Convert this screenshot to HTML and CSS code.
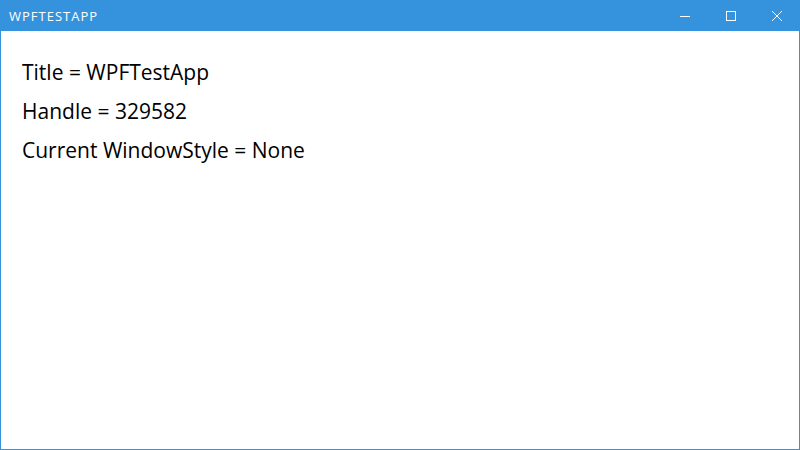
FILE: index.html
```html
<!DOCTYPE html>
<html>
<head>
<meta charset="utf-8">
<link rel="stylesheet" href="styles.css">
</head>
<body>
<div class="window">
  <div class="titlebar">
    <div class="title">WPFTESTAPP</div>
    <div class="controls">
      <div class="btn">
        <svg width="12" height="12" viewBox="0 0 12 12"><line x1="1" y1="6.5" x2="11" y2="6.5" stroke="#fff" stroke-width="1"/></svg>
      </div>
      <div class="btn">
        <svg width="12" height="12" viewBox="0 0 12 12"><rect x="1.5" y="1.5" width="9" height="9" fill="none" stroke="#fff" stroke-width="1"/></svg>
      </div>
      <div class="btn">
        <svg width="12" height="12" viewBox="0 0 12 12"><path d="M1 1 L11 11 M11 1 L1 11" stroke="#fff" stroke-width="1"/></svg>
      </div>
    </div>
  </div>
  <div class="content">
    <div class="line">Title = WPFTestApp</div>
    <div class="line">Handle = 329582</div>
    <div class="line">Current WindowStyle = None</div>
  </div>
</div>
</body>
</html>
```
FILE: styles.css
```css
html, body {
  margin: 0;
  padding: 0;
  width: 800px;
  height: 450px;
  overflow: hidden;
  background: #fff;
}
.window {
  width: 800px;
  height: 450px;
  box-sizing: border-box;
  border: 1px solid #3592dd;
  border-top: none;
  display: flex;
  flex-direction: column;
}
.titlebar {
  height: 31px;
  background: #3592dd;
  margin: 0 -1px;
  display: flex;
  align-items: center;
  justify-content: space-between;
  flex-shrink: 0;
}
.title {
  color: #fff;
  font-family: "Open Sans", sans-serif;
  font-size: 13px;
  letter-spacing: 1px;
  padding-left: 9px;
}
.controls {
  display: flex;
  height: 31px;
}
.btn {
  width: 46px;
  height: 31px;
  display: flex;
  align-items: center;
  justify-content: center;
}
.content {
  padding: 27px 0 0 21px;
  font-family: "Open Sans", sans-serif;
  font-size: 21px;
  color: #000;
  display: flex;
  flex-direction: column;
  gap: 11px;
}
.line {
  line-height: 28px;
}
```
